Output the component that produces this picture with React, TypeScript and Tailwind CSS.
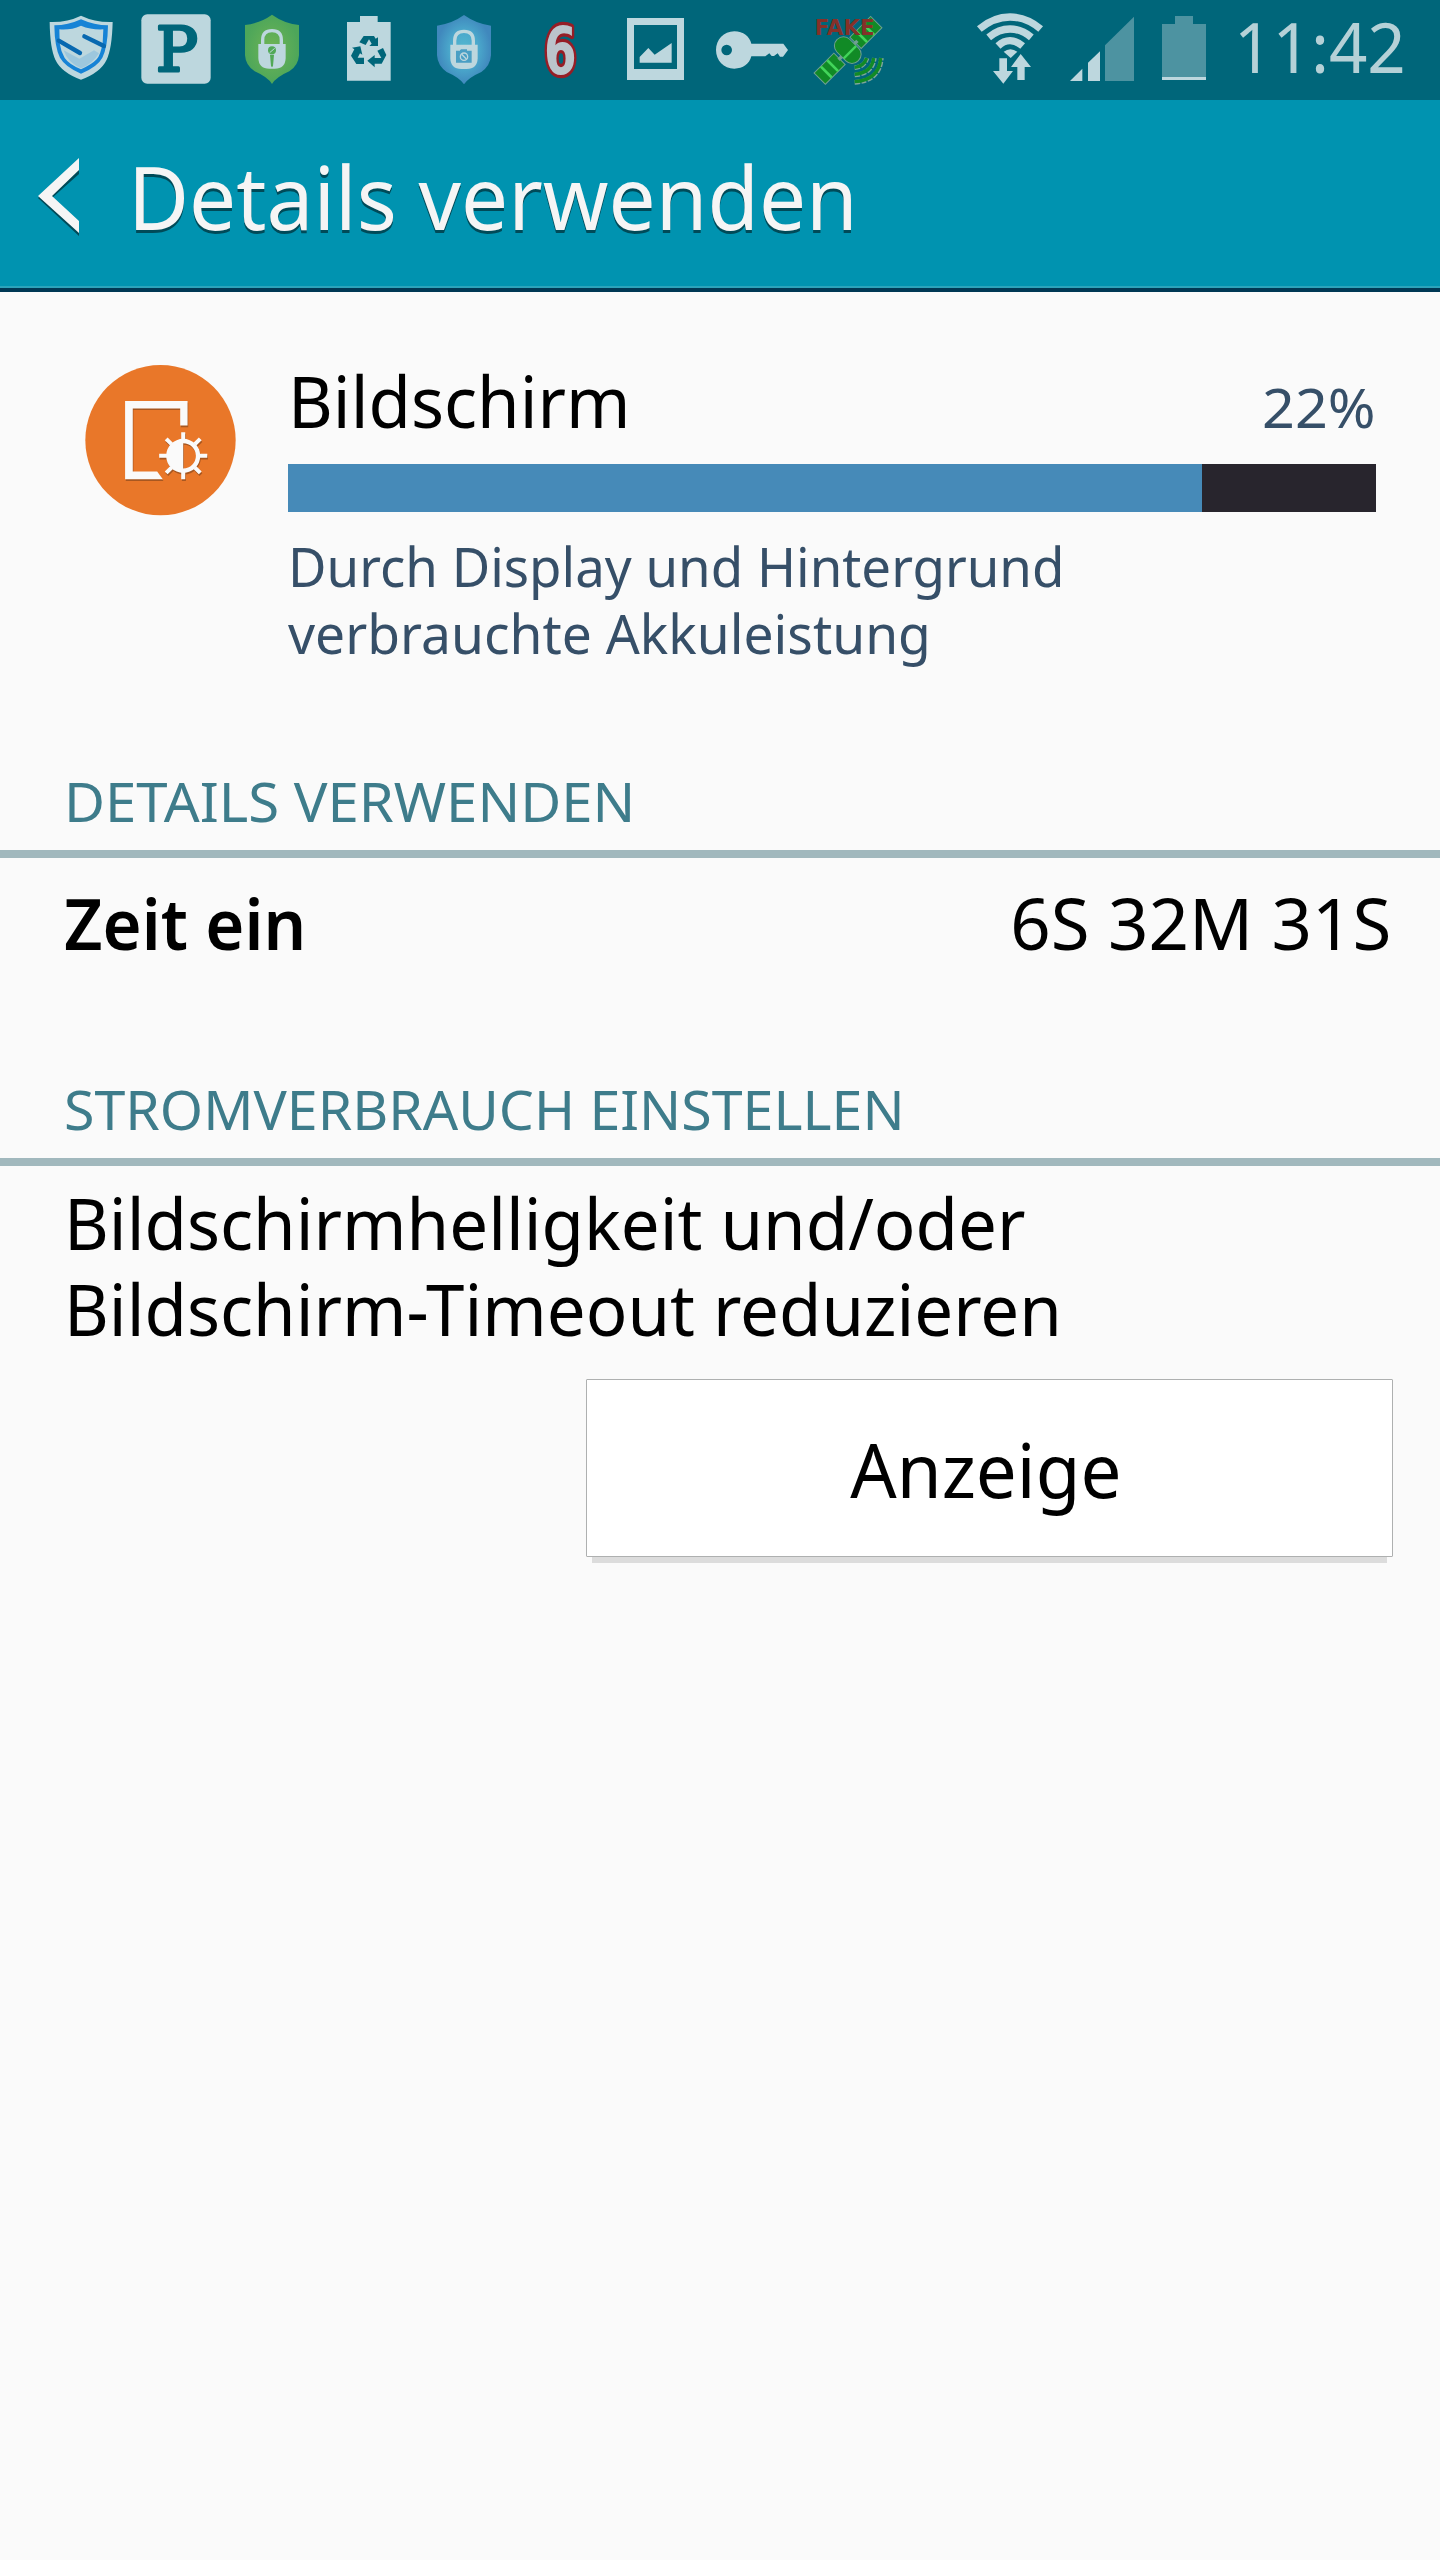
import type { ReactNode } from "react";

type StatusIconProps = {
  viewBox: string;
  className: string;
  children: ReactNode;
};

function StatusIcon({ viewBox, className, children }: StatusIconProps) {
  return (
    <svg viewBox={viewBox} className={`h-[100px] shrink-0 ${className}`} fill="#bdd7de" aria-hidden="true">
      {children}
    </svg>
  );
}

function NotificationIcons() {
  return (
    <div className="flex">
      <StatusIcon viewBox="30 0 258 300" className="w-[86px]">
        <path d="M153 47Q197 68 248 66Q246 145 230 179Q212 217 153 239Q94 217 76 179Q60 145 59 66Q110 68 153 47Z" />
        <path d="M153 58Q193 76 234 76Q233 143 217 173Q203 200 153 221Q105 200 90 173Q74 143 73 76Q114 76 153 58Z" fill="#1683d6" />
        <path d="M153 77Q184 90 220 88L218 128Q212 164 200 178Q186 193 153 208Q117 193 104 174Q92 153 89 129L88 88Q122 91 153 77Z" />
        <path d="M101 151L148 176L192 151L207 160Q188 192 153 205Q112 187 101 151Z" fill="#90c1dd" opacity="0.7" />
        <path d="M86 122L150 159M163 109L222 138" stroke="#0868b0" strokeWidth="13" strokeLinecap="round" />
      </StatusIcon>
      <StatusIcon viewBox="288 0 300 300" className="w-[100px]">
        <rect x="334" y="43" width="208" height="208" rx="18" />
        <text
          x="378"
          y="214"
          textLength="126"
          lengthAdjust="spacingAndGlyphs"
          className="font-['DejaVu_Serif',serif] text-[184px]"
          fill="#00667a"
          stroke="#00667a"
          strokeWidth="9"
          strokeLinejoin="round"
        >
          P
        </text>
      </StatusIcon>
      <StatusIcon viewBox="588 0 288 300" className="w-[96px]">
        <defs>
          <radialGradient id="greenShield">
            <stop offset="0" stopColor="#70b554" />
            <stop offset="1" stopColor="#4da65a" />
          </radialGradient>
        </defs>
        <path d="M726 44Q762 70 807 75V166Q805 197 778 214Q739 231 726 252Q713 231 674 214Q647 197 645 166V75Q690 70 726 44Z" fill="url(#greenShield)" />
        <path d="M698 134V120Q698 92 726 92Q754 92 754 120V134" fill="none" stroke="#bdd7de" strokeWidth="10" />
        <path d="M685 132H767V174Q766 206 734 206H718Q686 206 685 174Z" />
        <circle cx="726" cy="151" r="12" fill="#51a957" />
        <path d="M720 164H732L729 198L726 202L723 198Z" fill="#51a957" />
        <path d="M719 158L734 145" stroke="#bdd7de" strokeWidth="3" />
      </StatusIcon>
      <StatusIcon viewBox="-24 0 276 300" className="w-[92px]">
        <path d="M51 66H90V48H143V66H182V242H51Z" />
        <g fill="#00667a">
          <path d="M101 108H132L137 116L144 112V138H118L125 131L117 118L107 135L88 127Z" />
          <path d="M66 143L91 139L97 164L90 160L83 173H102V192H79L63 167L73 148Z" />
          <path d="M142 152L159 144L169 165L155 191H134V202L112 182L134 165V174H154Z" />
        </g>
      </StatusIcon>
      <StatusIcon viewBox="252 0 312 300" className="w-[104px]">
        <defs>
          <radialGradient id="blueShield">
            <stop offset="0" stopColor="#55b9d0" />
            <stop offset="0.55" stopColor="#4aa7cb" />
            <stop offset="1" stopColor="#4088bd" />
          </radialGradient>
        </defs>
        <path d="M402 45Q438 71 483 77V166Q481 197 454 216Q415 233 402 253Q389 233 350 216Q323 197 321 166V77Q366 71 402 45Z" fill="url(#blueShield)" />
        <path d="M374 136V122Q374 94 402 94Q430 94 430 122V136" fill="none" stroke="#bdd7de" strokeWidth="10" />
        <path d="M361 134H443V175Q442 207 410 207H394Q362 207 361 175Z" />
        <path d="M380 152H390V149H393V148H411V152H425V188H378V152Z" fill="#4a9fc4" />
        <circle cx="402" cy="170" r="11" fill="none" stroke="#bdd7de" strokeWidth="4" />
        <path d="M395 163L409 177" stroke="#bdd7de" strokeWidth="4" />
      </StatusIcon>
      <StatusIcon viewBox="564 0 252 300" className="w-[84px]">
        <text
          x="642"
          y="221"
          textLength="98"
          lengthAdjust="spacingAndGlyphs"
          className="font-['DejaVu_Sans',sans-serif] text-[198px] font-bold [paint-order:stroke]"
          fill="#bbc4cb"
          stroke="#961d26"
          strokeWidth="20"
          strokeLinejoin="round"
        >
          6
        </text>
      </StatusIcon>
      <StatusIcon viewBox="-54 0 300 300" className="w-[100px]">
        <path fillRule="evenodd" d="M21 54H192V240H21ZM42 75V207H171V75Z" />
        <path d="M59 188V171L85 144L104 164L155 129V188Z" />
      </StatusIcon>
      <StatusIcon viewBox="246 0 294 300" className="w-[98px]">
        <path
          fillRule="evenodd"
          d="M343 94C370 94 389 110 394 131H490L504 150L489 170H480L473 160L462 168H455L448 160L436 169H394C388 192 369 206 343 206C311 206 288 181 288 150C288 119 311 94 343 94ZM320 134A16 16 0 1 0 320 166A16 16 0 1 0 320 134Z"
        />
      </StatusIcon>
      <StatusIcon viewBox="540 0 300 300" className="w-[100px]">
        <g transform="translate(684 151) rotate(-45)" stroke="#6f9f91" strokeWidth="3">
          <rect x="-120" y="-24" width="84" height="48" fill="#118a26" />
          <rect x="32" y="-24" width="88" height="48" fill="#118a26" />
          <path d="M-40 0H40" strokeWidth="10" />
          <path d="M-92 -23V23M-65 -23V23M58 -23V23M88 -23V23" stroke="#42d55a" strokeWidth="8" />
        </g>
        <g transform="translate(684 151) rotate(45)">
          <rect x="-46" y="-27" width="90" height="54" rx="26" fill="#118a26" stroke="#6f9f91" strokeWidth="3" />
          <path d="M8 -26V26" stroke="#42d55a" strokeWidth="7" />
        </g>
        <g fill="none">
          <path d="M704 203Q733 201 741 174M704 225Q758 220 763 174M704 247Q780 242 784 174" stroke="#7fa69b" strokeWidth="14" strokeDasharray="15 4" />
          <path d="M704 202Q732 199 740 174M704 223Q756 218 761 174M704 245Q777 240 782 174" stroke="#118a26" strokeWidth="10" />
        </g>
        <text x="584" y="106" textLength="180" lengthAdjust="spacingAndGlyphs" className="font-['DejaVu_Sans',sans-serif] text-[63px] font-bold" fill="#853129">
          FAKE
        </text>
      </StatusIcon>
    </div>
  );
}

function SystemIcons() {
  return (
    <div className="flex">
      <StatusIcon viewBox="30 0 288 300" className="w-[96px]">
        <g fill="none" stroke="#bdd7de" strokeWidth="22">
          <path d="M88 87Q131 51 180 51T272 87" />
          <path d="M116 112Q146 87 180 87T244 112" />
          <path d="M144 138Q161 122 180 122T218 138" />
        </g>
        <path d="M161 155Q181 140 202 155L182 174Z" />
        <path d="M148 175H171V213H189L160 251L129 213H148Z" />
        <path d="M212 162L243 201H224V240H202V201H183Z" />
      </StatusIcon>
      <StatusIcon viewBox="318 0 276 300" className="w-[92px]">
        <path d="M360 243L397 206V243ZM414 243V188L450 154V243Z" />
        <path d="M465 243V136L552 50V243Z" fill="#4d93a1" />
      </StatusIcon>
      <StatusIcon viewBox="594 0 216 300" className="w-[72px]">
        <path d="M636 72H675V48H729V72H768V231H636Z" fill="#4d93a1" />
        <rect x="636" y="231" width="132" height="9" />
      </StatusIcon>
    </div>
  );
}

function StatusBar() {
  return (
    <div className="flex h-[100px] items-start bg-[#00667a] pl-10">
      <NotificationIcons />
      <div className="ml-[60px] flex">
        <SystemIcons />
        <span className="ml-[14px] origin-left scale-x-[0.96] text-[70px] leading-[92px] text-[#b5d1d7]">11:42</span>
      </div>
    </div>
  );
}

function TitleBar() {
  return (
    <header className="flex h-48 items-start border-b-4 border-[#003854] bg-[#0093b0] pl-[38px] text-[#f5f5f5] shadow-[inset_0_-2px_0_#2ba3bb]">
      <svg viewBox="0 0 42 80" className="mt-[58px] h-20 w-[42px] shrink-0" aria-hidden="true">
        <path d="M41 3V16L14 40L41 65V78L0 40Z" fill="#004a58" />
        <path d="M41 0V12L14 38L41 63V75L0 38Z" fill="currentColor" />
      </svg>
      <h1 className="ml-12 mt-[36px] origin-left scale-x-[0.951] whitespace-nowrap text-[88px] leading-[120px] [text-shadow:0_3px_0_#004a58]">
        Details verwenden
      </h1>
    </header>
  );
}

function ScreenIcon() {
  return (
    <svg viewBox="75 75 452 452" className="h-[151px] w-[151px] shrink-0" aria-hidden="true">
      <circle cx="301" cy="300" r="225" fill="#e97729" />
      {[
        { color: "#a85720", offset: "translate(2 5)" },
        { color: "#fafafa", offset: "translate(0 0)" },
      ].map(({ color, offset }) => (
        <g key={color} transform={offset} fill={color}>
          <path d="M195 183H382V256H360V205H218V394H291L308 417H195Z" />
          <path fillRule="evenodd" d="M369 296A51 51 0 1 1 369 398A51 51 0 1 1 369 296ZM369 309V385A38 38 0 0 0 369 309Z" />
          <path
            d="M369 276V300M369 394V417M297 347H321M417 347H441M318 296L334 312M404 382L420 398M420 296L404 312M334 382L318 398"
            fill="none"
            stroke={color}
            strokeWidth="12"
          />
        </g>
      ))}
    </svg>
  );
}

function UsageSummary() {
  const charged = 84;

  return (
    <section className="flex h-[458px] items-start pl-[85px] pr-16 pt-[73px]">
      <ScreenIcon />
      <div className="ml-[52px] flex-1">
        <div className="flex h-[99px] items-start justify-between">
          <h2 className="-mt-[14px] origin-left scale-x-[0.972] text-[71px] leading-[100px] text-black">Bildschirm</h2>
          <span className="-mt-[7px] origin-right scale-x-[1.045] text-[55px] leading-[98px] text-[#364f68]">22%</span>
        </div>
        <div className="h-12 bg-[#28252d]">
          <div className="h-full bg-[#468ab8]" style={{ width: `${charged}%` }} />
        </div>
        <p className="mt-[20px] whitespace-nowrap text-[55px] leading-[67px] text-[#364f68]">
          <span className="block origin-left scale-x-[0.96]">Durch Display und Hintergrund</span>
          <span className="block origin-left scale-x-[0.97]">verbrauchte Akkuleistung</span>
        </p>
      </div>
    </section>
  );
}

type SectionTitleProps = {
  className: string;
  children: ReactNode;
};

function SectionTitle({ className, children }: SectionTitleProps) {
  return (
    <div className="h-[108px] border-b-8 border-[#a1b8bd] pl-16 pt-[15px]">
      <h3 className={`inline-block origin-left whitespace-nowrap text-[55px] leading-[72px] text-[#3e7c8b] ${className}`}>
        {children}
      </h3>
    </div>
  );
}

export default function App() {
  return (
    <main className="h-[2560px] w-[1440px] overflow-hidden bg-[#fafafa] font-['Noto_Sans',sans-serif]">
      <StatusBar />
      <TitleBar />
      <UsageSummary />

      <SectionTitle className="scale-x-[1.023]">DETAILS VERWENDEN</SectionTitle>
      <div className="flex h-[200px] items-start justify-between pl-16 pr-[49px] pt-[15px] text-[71px] leading-[100px] text-black">
        <span className="origin-left scale-x-[0.943] font-semibold">Zeit ein</span>
        <span className="origin-right scale-x-[0.997]">6S 32M 31S</span>
      </div>

      <SectionTitle className="scale-x-[1.009]">STROMVERBRAUCH EINSTELLEN</SectionTitle>
      <p className="h-[213px] whitespace-nowrap pl-16 pt-[14px] text-[71px] leading-[86px] text-black">
        <span className="block origin-left scale-x-[0.972]">Bildschirmhelligkeit und/oder</span>
        <span className="block origin-left scale-x-[0.972]">Bildschirm-Timeout reduzieren</span>
      </p>
      <div className="flex justify-end pr-[47px]">
        <button
          type="button"
          className="h-[178px] w-[807px] rounded-[1px] border border-[#aeb0b0] bg-white pr-[7px] pt-[2px] text-[75px] text-black shadow-[0_12px_0_-6px_#dcdcdc]"
        >
          <span className="inline-block scale-x-[0.97]">Anzeige</span>
        </button>
      </div>
    </main>
  );
}
